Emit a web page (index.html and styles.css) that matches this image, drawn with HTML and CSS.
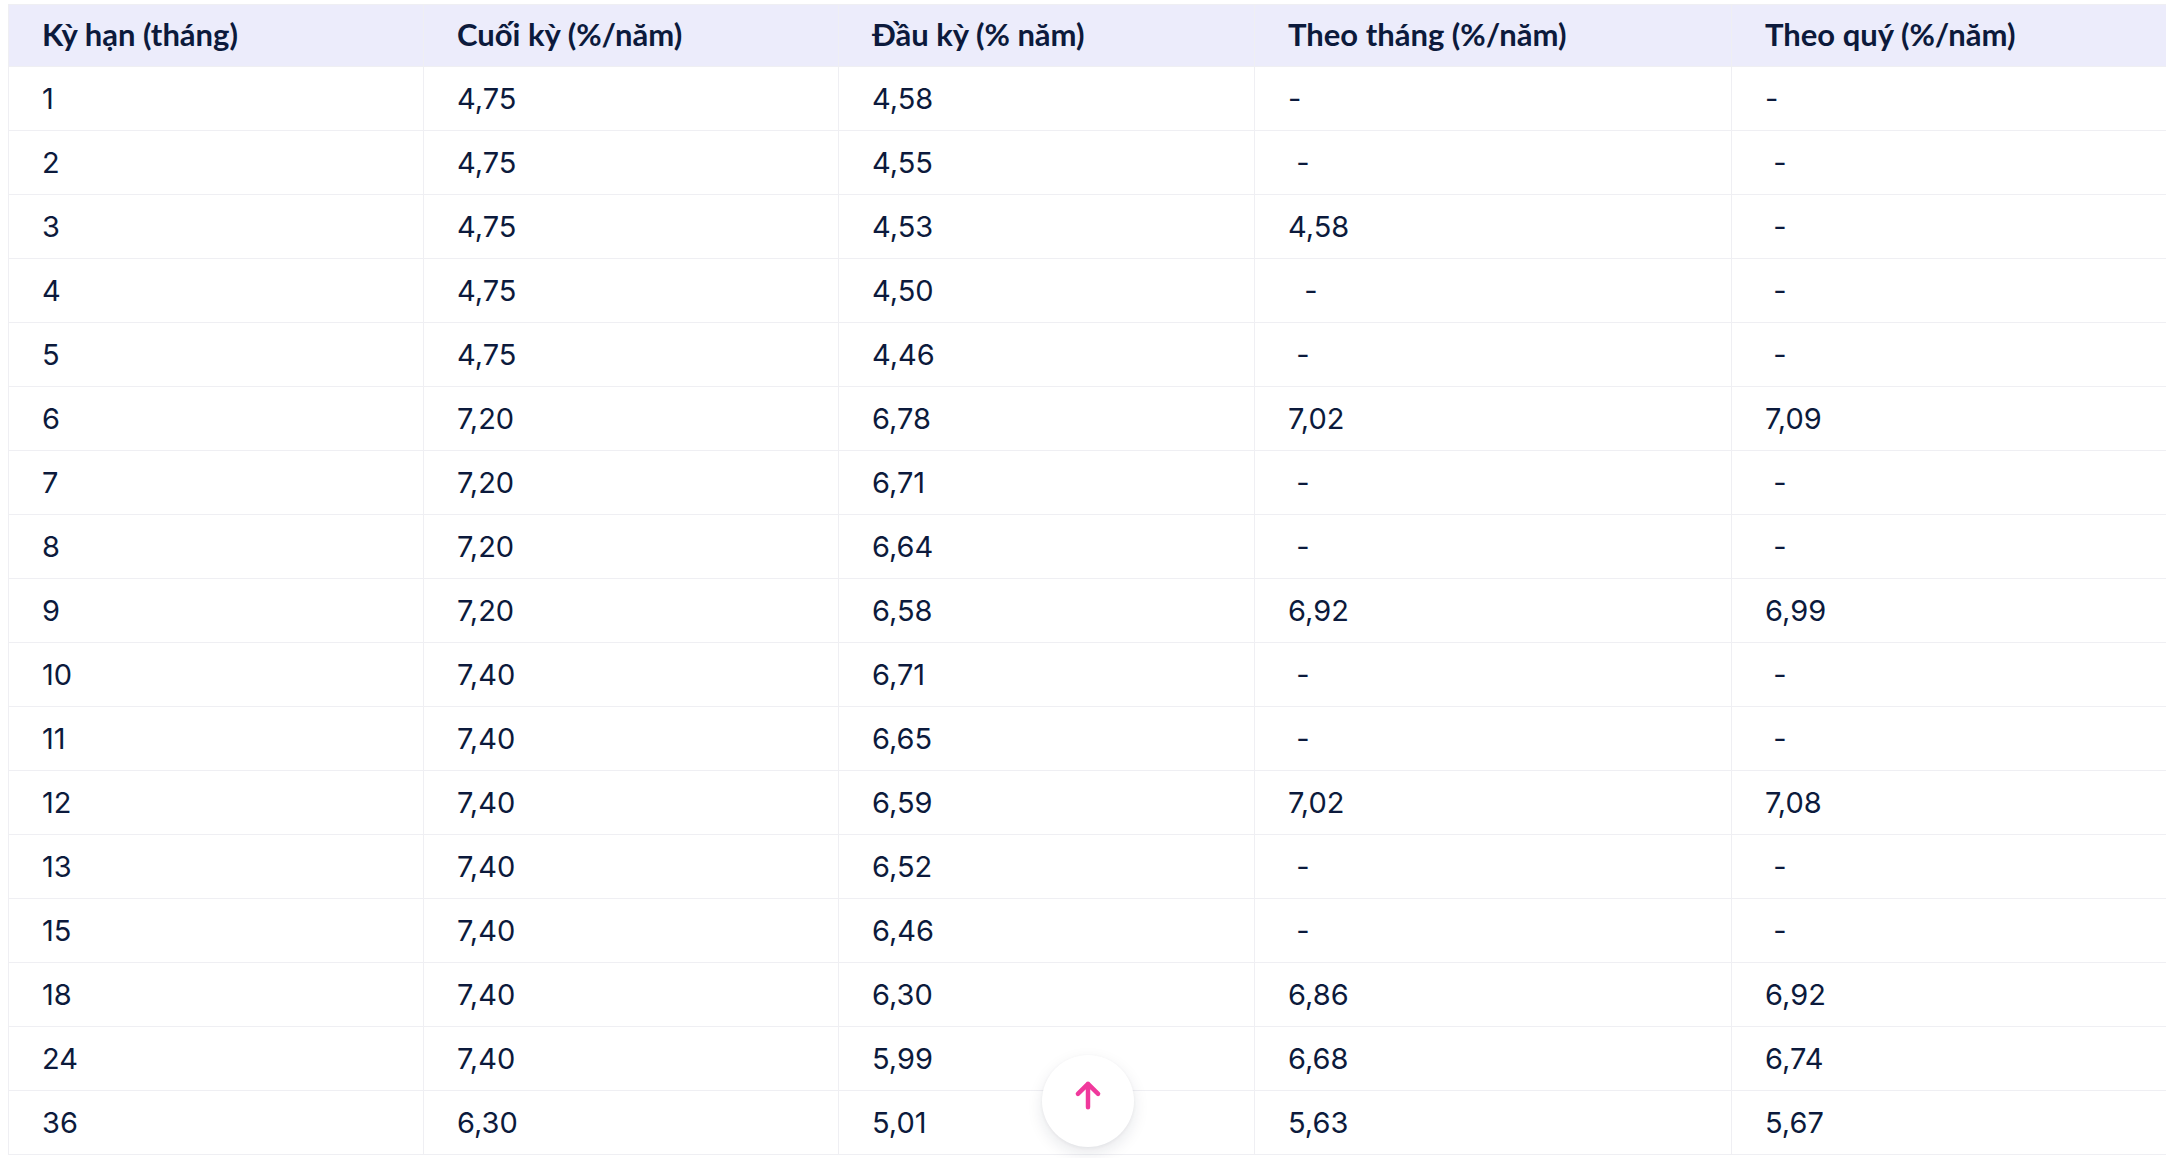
FILE: index.html
```html
<!DOCTYPE html>
<html lang="vi">
<head>
<meta charset="utf-8">
<title>Lãi suất tiết kiệm</title>
<link rel="stylesheet" href="styles.css">
</head>
<body>
<table class="rates">
  <colgroup>
    <col class="c1"><col class="c2"><col class="c3"><col class="c4"><col class="c5">
  </colgroup>
  <thead>
    <tr>
      <th>Kỳ hạn (tháng)</th>
      <th>Cuối kỳ (%/năm)</th>
      <th>Đầu kỳ (% năm)</th>
      <th>Theo tháng (%/năm)</th>
      <th>Theo quý (%/năm)</th>
    </tr>
  </thead>
  <tbody>
    <tr><td>1</td><td>4,75</td><td>4,58</td><td>-</td><td>-</td></tr>
    <tr><td>2</td><td>4,75</td><td>4,55</td><td>&nbsp;-</td><td>&nbsp;-</td></tr>
    <tr><td>3</td><td>4,75</td><td>4,53</td><td>4,58</td><td>&nbsp;-</td></tr>
    <tr><td>4</td><td>4,75</td><td>4,50</td><td>&nbsp;&nbsp;-</td><td>&nbsp;-</td></tr>
    <tr><td>5</td><td>4,75</td><td>4,46</td><td>&nbsp;-</td><td>&nbsp;-</td></tr>
    <tr><td>6</td><td>7,20</td><td>6,78</td><td>7,02</td><td>7,09</td></tr>
    <tr><td>7</td><td>7,20</td><td>6,71</td><td>&nbsp;-</td><td>&nbsp;-</td></tr>
    <tr><td>8</td><td>7,20</td><td>6,64</td><td>&nbsp;-</td><td>&nbsp;-</td></tr>
    <tr><td>9</td><td>7,20</td><td>6,58</td><td>6,92</td><td>6,99</td></tr>
    <tr><td>10</td><td>7,40</td><td>6,71</td><td>&nbsp;-</td><td>&nbsp;-</td></tr>
    <tr><td>11</td><td>7,40</td><td>6,65</td><td>&nbsp;-</td><td>&nbsp;-</td></tr>
    <tr><td>12</td><td>7,40</td><td>6,59</td><td>7,02</td><td>7,08</td></tr>
    <tr><td>13</td><td>7,40</td><td>6,52</td><td>&nbsp;-</td><td>&nbsp;-</td></tr>
    <tr><td>15</td><td>7,40</td><td>6,46</td><td>&nbsp;-</td><td>&nbsp;-</td></tr>
    <tr><td>18</td><td>7,40</td><td>6,30</td><td>6,86</td><td>6,92</td></tr>
    <tr><td>24</td><td>7,40</td><td>5,99</td><td>6,68</td><td>6,74</td></tr>
    <tr><td>36</td><td>6,30</td><td>5,01</td><td>5,63</td><td>5,67</td></tr>
  </tbody>
</table>
<button class="to-top" type="button" aria-label="Lên đầu trang">
  <svg viewBox="0 0 32 32" width="34" height="34" aria-hidden="true">
    <path d="M16 27.5V5.5M6.5 15L16 5.5l9.5 9.5" fill="none" stroke="#F0399C" stroke-width="4.2" stroke-linecap="round" stroke-linejoin="round"/>
  </svg>
</button>
</body>
</html>
```

FILE: styles.css
```css
html, body {
  background: #ffffff;
}
body {
  margin: 4px 8px 0;
  font-family: "Inter", "Liberation Sans", sans-serif;
  color: #0c1a3c;
}
.rates {
  width: 100%;
  border-collapse: collapse;
  table-layout: fixed;
  font-size: 29px;
}
.rates .c1 { width: 415px; }
.rates .c2 { width: 415px; }
.rates .c3 { width: 416px; }
.rates .c4 { width: 477px; }
.rates .c5 { width: 435px; }
.rates th,
.rates td {
  text-align: left;
  padding: 0 0 0 33px;
  border: 1px solid #efeff3;
  white-space: nowrap;
}
.rates thead th {
  background: #ececfb;
  height: 58px;
  padding-bottom: 3px;
  font-family: "Lato", "Liberation Sans", sans-serif;
  font-size: 31px;
  font-weight: 700;
}
.rates tbody td {
  height: 63px;
  font-weight: 400;
}
.to-top {
  position: fixed;
  left: 1042px;
  top: 1055px;
  width: 92px;
  height: 92px;
  border-radius: 50%;
  border: none;
  background: #ffffff;
  box-shadow: 0 6px 16px rgba(20, 30, 60, 0.10), 0 1px 4px rgba(20, 30, 60, 0.06);
  display: flex;
  align-items: center;
  justify-content: center;
  padding: 0 0 12px;
}
.to-top svg {
  display: block;
}
```
